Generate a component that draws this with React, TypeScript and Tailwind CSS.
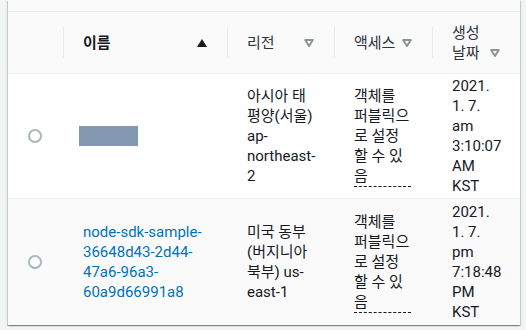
import React from 'react';

const cols = 'grid grid-cols-[55px_164px_107px_98px_88px]';

function SortUp() {
    return (
        <svg width="10" height="8" viewBox="0 0 10 8" className="shrink-0">
            <path d="M5 0 L10 8 L0 8 Z" fill="#16191f" />
        </svg>
    );
}

function SortDown() {
    return (
        <svg width="10" height="8" viewBox="0 0 10 8" className="shrink-0">
            <path d="M1.2 1 L8.8 1 L5 7 Z" fill="#fff" stroke="#879596" strokeWidth="2" strokeLinejoin="round" />
        </svg>
    );
}

function Divider() {
    return <span className="absolute left-0 top-[15px] h-[31px] w-px bg-[#eaeded]" />;
}

function Radio() {
    return <span className="block w-[14px] h-[14px] rounded-full border-2 border-[#aab7b8] bg-white" />;
}

function Access() {
    return (
        <span className="inline-block border-b border-dashed border-[#16191f]">
            객체를 퍼블릭으로 설정할 수 있음
        </span>
    );
}

const rows = [
    {
        name: null,
        region: '아시아 태평양(서울) ap-northeast-2',
        date: ['2021.', '1. 7.', 'am', '3:10:07', 'AM', 'KST'],
        bg: 'bg-white',
        h: 'h-[125px] border-b border-[#eaeded]',
    },
    {
        name: 'node-sdk-sample-36648d43-2d44-47a6-96a3-60a9d66991a8',
        region: '미국 동부 (버지니아 북부) us-east-1',
        date: ['2021.', '1. 7.', 'pm', '7:18:48', 'PM', 'KST'],
        bg: 'bg-[#fafafa]',
        h: 'h-[126px]',
    },
];

export default function App() {
    return (
        <div className="w-[526px] h-[330px] overflow-hidden bg-[#f2f3f3] pl-[8px] font-['Roboto','Noto_Sans_CJK_KR',sans-serif] text-[15px] leading-[20px] text-[#16191f]">
            <div className="w-[512px] bg-white shadow-[0_1px_1px_0_rgba(0,28,36,0.3),1px_1px_1px_0_rgba(0,28,36,0.15),-1px_1px_1px_0_rgba(0,28,36,0.15)]">
                <div className="h-[12px] bg-[#fafafa] border-b border-[#eaeded]" />

                {/* header */}
                <div className={`${cols} h-[62px] bg-[#fafafa] border-b border-[#eaeded]`}>
                    <div />
                    <div className="relative flex items-center justify-between px-5">
                        <Divider />
                        <span className="font-bold">이름</span>
                        <SortUp />
                    </div>
                    <div className="relative flex items-center justify-between px-5 text-[#2f343b]">
                        <Divider />
                        <span>리전</span>
                        <SortDown />
                    </div>
                    <div className="relative flex items-center justify-between gap-[6px] px-5 text-[#2f343b]">
                        <Divider />
                        <span>액세스</span>
                        <SortDown />
                    </div>
                    <div className="relative flex items-center justify-between px-5 text-[#2f343b]">
                        <Divider />
                        <span className="flex items-end gap-[10px]">
                            <span>생성 날짜</span>
                            <span className="mb-[6px]">
                                <SortDown />
                            </span>
                        </span>
                    </div>
                </div>

                {/* rows */}
                {rows.map((r, i) => (
                    <div key={i} className={`${cols} ${r.bg} ${r.h}`}>
                        <div className="flex items-center pl-[20px]">
                            <Radio />
                        </div>
                        <div className="flex items-center pl-5 pr-4">
                            {r.name ? (
                                <span className="text-[#0073bb]">{r.name}</span>
                            ) : (
                                <span className="block ml-[-4px] w-[59px] h-[20px] bg-[#8497b0]" />
                            )}
                        </div>
                        <div className="flex items-center px-5">
                            <span>{r.region}</span>
                        </div>
                        <div className="flex items-center pl-5 pr-[21px]">
                            <Access />
                        </div>
                        <div className="flex flex-col justify-center px-5 whitespace-nowrap">
                            {r.date.map((d) => (
                                <span key={d}>{d}</span>
                            ))}
                        </div>
                    </div>
                ))}
            </div>
        </div>
    );
}
